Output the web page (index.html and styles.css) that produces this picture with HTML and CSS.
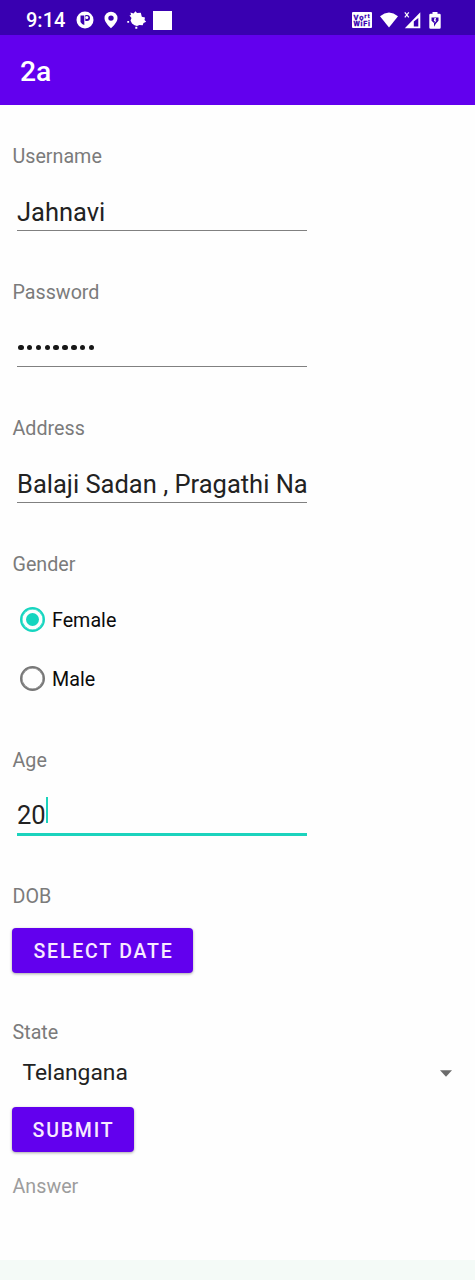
FILE: index.html
```html
<!DOCTYPE html>
<html lang="en">
<head>
<meta charset="utf-8">
<title>2a</title>
<link rel="stylesheet" href="styles.css">
</head>
<body>
<div class="screen">
  <div class="statusbar">
    <div class="status-left">
      <span class="clock">9:14</span>
      <svg class="icon-p" width="18" height="18" viewBox="0 0 18 18"><circle cx="9" cy="9" r="8.500" fill="#fff"/><path d="M4.500 4.500h3.800v9.500A6 6 0 0 1 4.500 11z" fill="#3900b1"/><path d="M9.300 4h1.700a3 3 0 0 1 0 6H9.300z" fill="#3900b1"/><circle cx="10.800" cy="6.500" r="1.500" fill="#fff"/></svg>
      <svg class="icon-pin" width="14" height="18" viewBox="0 0 14 18"><path fill="#fff" fill-rule="evenodd" d="M7 .7A6.500 6.500 0 0 0 .5 7.200C.5 11.500 7 17.300 7 17.300s6.500-5.800 6.500-10.100A6.500 6.500 0 0 0 7 .7zm0 3.700a2.700 2.700 0 1 1 0 5.400 2.700 2.700 0 0 1 0-5.400z"/></svg>
      <svg class="icon-leaf" width="20" height="18" viewBox="0 0 20 18"><path fill="#fff" d="M3.500 1.500 6.500 2.500 8.500.3l1.500 1.700 3.800-.3 1 4 3.200.8-.5 2.400 1.700 1.800-2.700 1.200-.8 2.300-3.200-.3-2.500 1.100-2.500-.8-2.500-1.800-1.500-3L4.500 7 2.500 4.500l1.500-.5zM.3 10h1.800v1.800H.3zM8.300 15.800h2v1.900h-2z"/></svg>
      <span class="square"></span>
    </div>
    <div class="status-right">
      <svg class="icon-vo" width="20" height="16" viewBox="0 0 20 16"><rect width="20" height="16" rx="1" fill="#fff"/><g fill="#3900b1" stroke="#3900b1" stroke-width=".3" font-family="Roboto, sans-serif" font-weight="700"><text x="1.500" y="7.500" font-size="7.500" textLength="10">Vo</text><text x="12.500" y="5.500" font-size="5" textLength="5">rt</text><text x="1.500" y="14.300" font-size="7.200" textLength="16.500">WiFi</text></g></svg>
      <svg class="icon-wifi" width="18" height="16" viewBox="0 0 18 16"><path fill="#fff" d="M0 4.200Q9-3.200 18 4.200L9 15.500z"/></svg>
      <svg class="icon-signal" width="17" height="18" viewBox="0 0 17 18"><path fill="#fff" fill-rule="evenodd" d="M16.300 1.300v16H.8zM14.300 7v8.500h-4.500V10.600z"/><path d="M.8 1.300l4 5M4.800 1.300l-4 5" stroke="#fff" stroke-width="1.200" fill="none"/></svg>
      <svg class="icon-battery" width="12" height="17" viewBox="0 0 12 17"><path fill="#fff" d="M3.500 0h5v1.800h2q1.200 0 1.200 1.200v12.500q0 1.200-1.200 1.200h-9q-1.200 0-1.200-1.200V3q0-1.200 1.200-1.200h2z"/><path d="M2.500 5.500h7v3.300L7 11.500l-2 3.200V11L2.500 8.800z" fill="#3900b1"/><path d="M5.500 6h1.500L6.400 8.400H7.500L5.500 11l.3-2H4.800z" fill="#fff"/></svg>
    </div>
  </div>
  <header class="appbar">2a</header>
  <main class="form">
    <section class="field">
      <div class="label">Username</div>
      <div class="input">Jahnavi</div>
    </section>
    <section class="field">
      <div class="label">Password</div>
      <div class="input password"><i></i><i></i><i></i><i></i><i></i><i></i><i></i><i></i><i></i></div>
    </section>
    <section class="field">
      <div class="label">Address</div>
      <div class="input">Balaji Sadan , Pragathi Na</div>
    </section>
    <section class="gender">
      <div class="label">Gender</div>
      <div class="option"><span class="radio checked"></span>Female</div>
      <div class="option"><span class="radio"></span>Male</div>
    </section>
    <section class="field">
      <div class="label">Age</div>
      <div class="input focused">20<span class="caret"></span></div>
    </section>
    <section class="dob">
      <div class="label">DOB</div>
      <div class="button date">SELECT DATE</div>
    </section>
    <section class="state">
      <div class="label">State</div>
      <div class="spinner"><span>Telangana</span><svg width="12" height="7" viewBox="0 0 12 7"><path d="M0 .3h12L6 6.700z" fill="#6b6b6b"/></svg></div>
      <div class="button submit">SUBMIT</div>
    </section>
    <div class="label answer">Answer</div>
  </main>
  <footer class="navbar"></footer>
</div>
</body>
</html>
```

FILE: styles.css
```css
* { box-sizing: border-box; }
body { margin: 0; background: #fefefe; font-family: Roboto, "Liberation Sans", sans-serif; }
.screen { width: 475px; height: 1280px; display: flex; flex-direction: column; overflow: hidden; }
.statusbar { height: 35px; flex: none; background: #3900b1; display: flex; justify-content: space-between; align-items: center; padding: 5px 34px 0 26px; }
.status-left, .status-right { display: flex; align-items: center; }
.clock { width: 49.500px; color: #fff; font-size: 20px; line-height: 24px; font-weight: 500; white-space: nowrap; }
.icon-pin { margin-left: 10px; }
.icon-leaf { margin-left: 9px; }
.square { width: 19px; height: 19px; margin-left: 6.500px; background: #fff; }
.icon-wifi { margin-left: 8px; }
.icon-signal { margin-left: 6px; }
.icon-battery { margin-left: 8px; }
.appbar { height: 70px; flex: none; background: #6200ee; color: #fff; font-size: 28.3px; font-weight: 500; line-height: 74px; padding-left: 20px; }
.form { flex: 1; padding: 40px 12px 0; }
.label { height: 24px; padding-left: 0.500px; color: #7b7b7b; font-size: 19.7px; line-height: 24px; }
.field { height: 136px; }
.input { display: flex; align-items: center; width: 290px; height: 62px; margin-left: 5px; padding-top: 25px; border-bottom: 1px solid #808080; color: #222; font-size: 25.5px; line-height: 30px; white-space: nowrap; }
.password { gap: 3.350px; padding-left: 1px; padding-top: 24px; }
.password i { width: 5.500px; height: 5.500px; border-radius: 50%; background: #171717; }
.focused { height: 63px; padding-top: 23px; border-bottom: 3px solid #1bd3bd; }
.caret { width: 2.500px; height: 26px; margin-bottom: 9px; background: #1bd3bd; }
.gender { height: 196px; }
.gender .label { margin-bottom: 14px; }
.option { display: flex; align-items: center; gap: 7.500px; height: 59.500px; padding-left: 7.500px; color: #0b0b0b; font-size: 19.7px; line-height: 24px; }
.radio { display: grid; place-items: center; width: 25px; height: 25px; margin-bottom: 3px; border: 2px solid #777; border-radius: 50%; box-shadow: inset 0 0 0 0.500px #777; }
.checked { border-color: #15d5bf; box-shadow: inset 0 0 0 0.500px #15d5bf; }
.checked::after { content: ""; width: 13px; height: 13px; border-radius: 50%; background: #15d5bf; }
.dob { height: 136px; }
.button { display: flex; align-items: center; justify-content: center; height: 45px; border-radius: 4px; background: #6200ee; color: #f8eaff; font-size: 19.5px; font-weight: 500; letter-spacing: 1.800px; padding-top: 2px; box-shadow: 0 1px 3px rgba(0,0,0,.35); }
.date { width: 181px; margin-top: 19px; padding-left: 2px; }
.state { height: 154px; }
.spinner { display: flex; align-items: center; justify-content: space-between; height: 34px; margin-top: 11px; padding: 0 11.500px 0 10.500px; color: #222; font-size: 22.800px; line-height: 28px; }
.submit { width: 122px; margin-top: 16.500px; padding-left: 1px; }
.answer { color: #9d9d9d; }
.navbar { height: 20px; flex: none; background: #f4faf7; }
```
